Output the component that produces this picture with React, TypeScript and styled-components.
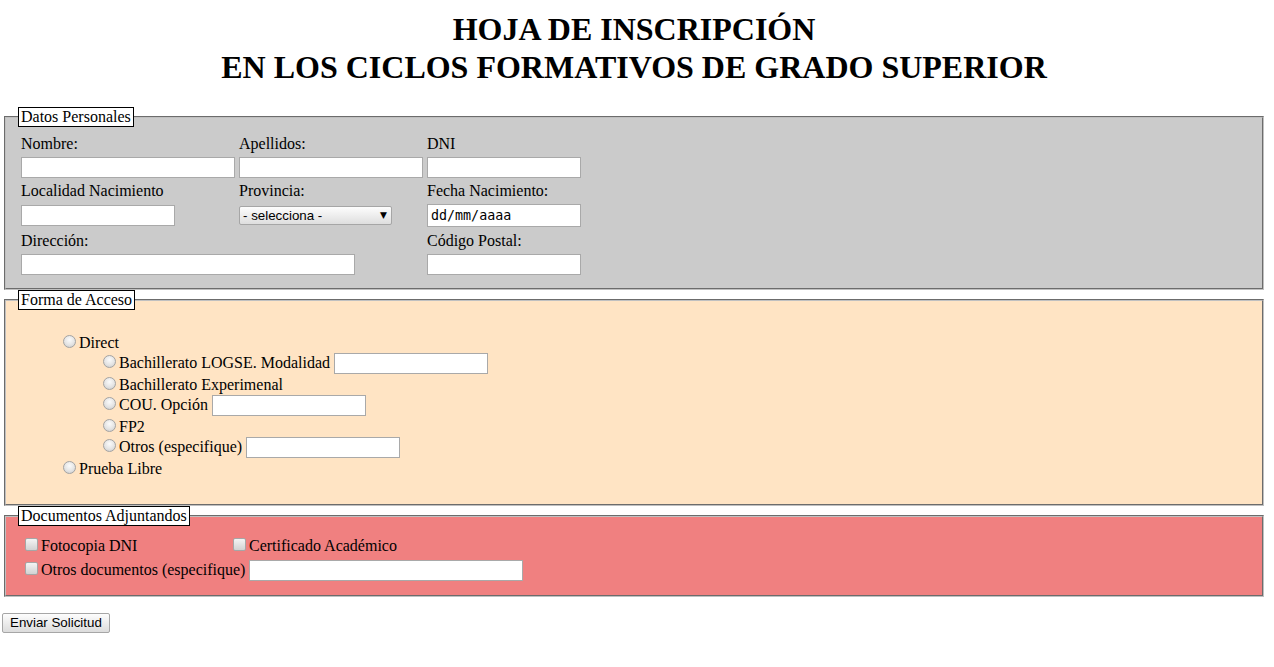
import React from 'react'
import styled, { createGlobalStyle } from 'styled-components'

const GlobalStyle = createGlobalStyle`
  html, body {
    margin: 0;
    padding: 0;
    background: #fff;
  }
  body {
    font-family: 'Liberation Serif', 'Times New Roman', serif;
    font-size: 16px;
    color: #000;
  }
`

const Page = styled.form`
  padding: 0 8px 0 2px;
`

const Title = styled.h1`
  margin: 10px 0 21px;
  font-size: 32px;
  line-height: 38px;
  font-weight: bold;
  text-align: center;
`

const Section = styled.fieldset<{ $bg: string }>`
  margin: 0 2px;
  padding: 5.6px 12px 10px;
  border: 2px groove rgb(192, 192, 192);
  background: ${(p) => p.$bg};
`

const Legend = styled.legend`
  padding: 0 2px;
  background: #fff;
  border: 1px solid #000;
  font-size: 16px;
`

const PersonalGrid = styled.div`
  display: grid;
  grid-template-columns: 214px 184px 154px;
  column-gap: 4px;
  row-gap: 4px;
  padding: 2px 3px 3px;
  align-items: center;
`

const Label = styled.label<{ $col?: number }>`
  grid-column: ${(p) => p.$col ?? 'auto'};
  line-height: normal;
`

const TextInput = styled.input<{ $w: number; $span?: string }>`
  box-sizing: border-box;
  width: ${(p) => p.$w}px;
  height: 21px;
  margin: 0;
  padding: 1px 2px;
  border: 1px solid #a9a9a9;
  border-radius: 0;
  background: #fff;
  font-family: 'Liberation Sans', Arial, sans-serif;
  font-size: 13.33px;
  grid-column: ${(p) => p.$span ?? 'auto'};
  outline: none;
`

const DateInput = styled(TextInput)`
  height: 23px;
  margin-bottom: 1px;
  padding: 1px 3px;
  font-family: 'DejaVu Sans Mono', monospace;
  font-size: 13.33px;
  color: #000;
`

const SelectWrap = styled.div`
  position: relative;
  width: 153px;
  height: 19px;

  &::after {
    content: '▼';
    position: absolute;
    right: 5px;
    top: 3px;
    font-family: 'DejaVu Sans', sans-serif;
    font-size: 9px;
    line-height: 12px;
    pointer-events: none;
  }
`

const Select = styled.select`
  appearance: none;
  box-sizing: border-box;
  width: 153px;
  height: 19px;
  margin: 0;
  padding: 0 3px;
  border: 1px solid #a6a6a6;
  border-radius: 2px;
  background: linear-gradient(#fdfdfd, #dedede);
  font-family: 'Liberation Sans', Arial, sans-serif;
  font-size: 13.33px;
  color: #000;
`

const List = styled.ul<{ $nested?: boolean }>`
  list-style: none;
  margin: ${(p) => (p.$nested ? '0' : '17px 0 16px')};
  padding-left: 40px;
`

const Item = styled.li`
  line-height: normal;
`

const Radio = styled.input`
  appearance: none;
  box-sizing: border-box;
  width: 13px;
  height: 13px;
  margin: 3px 3px 0 5px;
  border: 1px solid #a3a3a3;
  border-radius: 50%;
  background: radial-gradient(circle at 50% 35%, #fbfbfb 0%, #e4e4e4 55%, #c9c9c9 100%);
  vertical-align: baseline;
`

const Check = styled.input`
  appearance: none;
  box-sizing: border-box;
  width: 13px;
  height: 13px;
  margin: 3px 3px 0 4px;
  border: 1px solid #a6a6a6;
  border-radius: 2px;
  background: linear-gradient(#f4f4f4, #d2d2d2);
  vertical-align: baseline;
`

const DocsGrid = styled.div`
  display: grid;
  grid-template-columns: 204px auto;
  column-gap: 4px;
  row-gap: 4px;
  padding: 3px 3px 4px;
  align-items: center;
`

const DocItem = styled.div<{ $span?: boolean }>`
  grid-column: ${(p) => (p.$span ? '1 / span 2' : 'auto')};
  line-height: normal;
`

const SubmitRow = styled.div`
  margin-top: 16px;
`

const SubmitButton = styled.button`
  box-sizing: border-box;
  height: 20px;
  margin: 0;
  padding: 0 7px;
  border: 1px solid #a6a6a6;
  border-radius: 2px;
  background: linear-gradient(#fdfdfd, #dcdcdc);
  font-family: 'Liberation Sans', Arial, sans-serif;
  font-size: 13.33px;
  color: #000;
`

const accessOptions = [
  { label: 'Bachillerato LOGSE. Modalidad', input: true },
  { label: 'Bachillerato Experimenal', input: false },
  { label: 'COU. Opción', input: true },
  { label: 'FP2', input: false },
  { label: 'Otros (especifique)', input: true },
]

export default function App() {
  return (
    <>
      <GlobalStyle />
      <Page onSubmit={(e) => e.preventDefault()}>
        <Title>
          HOJA DE INSCRIPCIÓN
          <br />
          EN LOS CICLOS FORMATIVOS DE GRADO SUPERIOR
        </Title>

        <Section $bg="#cbcbcb">
          <Legend>Datos Personales</Legend>
          <PersonalGrid>
            <Label>Nombre:</Label>
            <Label>Apellidos:</Label>
            <Label>DNI</Label>
            <TextInput $w={214} />
            <TextInput $w={184} />
            <TextInput $w={154} />

            <Label>Localidad Nacimiento</Label>
            <Label>Provincia:</Label>
            <Label>Fecha Nacimiento:</Label>
            <TextInput $w={154} />
            <SelectWrap>
              <Select defaultValue="">
                <option value="">- selecciona -</option>
              </Select>
            </SelectWrap>
            <DateInput $w={154} defaultValue="dd/mm/aaaa" readOnly />

            <Label $col={1}>Dirección:</Label>
            <Label $col={3}>Código Postal:</Label>
            <TextInput $w={334} $span="1 / span 2" />
            <TextInput $w={154} />
          </PersonalGrid>
        </Section>

        <Section $bg="#ffe4c4">
          <Legend>Forma de Acceso</Legend>
          <List>
            <Item>
              <Radio type="radio" name="acceso" />Direct
              <List $nested>
                {accessOptions.map((opt) => (
                  <Item key={opt.label}>
                    <Radio type="radio" name="direct" />{opt.label}
                    {opt.input && (
                      <>
                        {' '}
                        <TextInput $w={154} />
                      </>
                    )}
                  </Item>
                ))}
              </List>
            </Item>
            <Item>
              <Radio type="radio" name="acceso" />Prueba Libre
            </Item>
          </List>
        </Section>

        <Section $bg="#f08080">
          <Legend>Documentos Adjuntandos</Legend>
          <DocsGrid>
            <DocItem>
              <Check type="checkbox" />Fotocopia DNI
            </DocItem>
            <DocItem>
              <Check type="checkbox" />Certificado Académico
            </DocItem>
            <DocItem $span>
              <Check type="checkbox" />Otros documentos (especifique) <TextInput $w={274} />
            </DocItem>
          </DocsGrid>
        </Section>

        <SubmitRow>
          <SubmitButton type="submit">Enviar Solicitud</SubmitButton>
        </SubmitRow>
      </Page>
    </>
  )
}
